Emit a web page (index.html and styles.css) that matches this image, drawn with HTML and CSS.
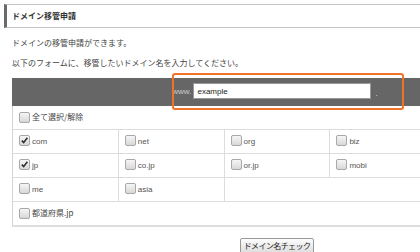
FILE: index.html
```html
<!DOCTYPE html>
<html lang="ja">
<head>
    <meta charset="UTF-8">
    <title>ドメイン移管申請</title>
    <link rel="stylesheet" href="styles.css">
</head>
<body>
    <div class="page">
        <h2 class="heading">ドメイン移管申請</h2>

        <div class="content">
            <p>ドメインの移管申請ができます。</p>
            <p>以下のフォームに、移管したいドメイン名を入力してください。</p>

            <div class="domain-bar">
                <span class="www">www.</span>
                <input type="text" class="domain-input" value="example">
                <span class="dot">.</span>
                <span class="highlight"></span>
            </div>

            <table class="tld-table">
                <tr>
                    <td colspan="5"><span class="cb"></span><span class="label ja">全て選択/解除</span></td>
                </tr>
                <tr>
                    <td><span class="cb checked"><svg viewBox="0 0 9 9"><path d="M1.8 4.6 L3.7 6.6 L7.4 1.8" /></svg></span><span class="label">com</span></td>
                    <td><span class="cb"></span><span class="label">net</span></td>
                    <td><span class="cb"></span><span class="label">org</span></td>
                    <td><span class="cb"></span><span class="label">biz</span></td>
                    <td></td>
                </tr>
                <tr>
                    <td><span class="cb checked"><svg viewBox="0 0 9 9"><path d="M1.8 4.6 L3.7 6.6 L7.4 1.8" /></svg></span><span class="label">jp</span></td>
                    <td><span class="cb"></span><span class="label">co.jp</span></td>
                    <td><span class="cb"></span><span class="label">or.jp</span></td>
                    <td><span class="cb"></span><span class="label">mobi</span></td>
                    <td></td>
                </tr>
                <tr>
                    <td><span class="cb"></span><span class="label">me</span></td>
                    <td><span class="cb"></span><span class="label">asia</span></td>
                    <td colspan="3"></td>
                </tr>
                <tr class="last">
                    <td colspan="5"><span class="cb"></span><span class="label ja">都道府県.jp</span></td>
                </tr>
            </table>

            <div class="submit-row">
                <button type="button" class="check-btn">ドメイン名チェック</button>
            </div>
        </div>
    </div>
</body>
</html>
```

FILE: styles.css
```css
html, body {
    margin: 0;
    padding: 0;
    overflow: hidden;
    background-color: #fff;
}
body {
    font-family: "Noto Sans CJK JP", "Liberation Sans", sans-serif;
    font-size: 8px;
    color: #444;
}
.page {
    width: 420px;
    height: 252px;
    overflow: hidden;
}
.heading {
    margin: 4px 0 0 4px;
    width: 600px;
    height: 22px;
    line-height: 22px;
    padding-left: 5px;
    border: 1px solid #c4c4c4;
    border-left: 3px solid #6a6a6a;
    font-size: 8px;
    font-weight: bold;
    color: #333;
}
.content {
    width: 530px;
    margin-left: 12px;
    padding-top: 5px;
}
.content p {
    margin: 0;
    line-height: 20px;
}
.domain-bar {
    position: relative;
    margin-top: 5px;
    height: 28px;
    background-color: #666;
    display: flex;
    align-items: center;
    justify-content: center;
}
.www {
    color: #ccc;
    font-family: "Liberation Sans", sans-serif;
    font-size: 8px;
    margin-right: 2px;
    margin-top: -2px;
}
.domain-input {
    width: 178px;
    height: 16px;
    box-sizing: border-box;
    border: 1px solid #999;
    padding: 0 3px;
    margin: -2px 0 0 0;
    font-family: "Liberation Sans", sans-serif;
    font-size: 8px;
    color: #222;
    background: #fff;
}
.dot {
    color: #ccc;
    margin-left: 4px;
    margin-right: 4px;
}
.highlight {
    position: absolute;
    left: 160px;
    top: -5px;
    width: 232px;
    height: 37px;
    box-sizing: border-box;
    border: 2px solid #f07328;
    border-radius: 3px;
}
.tld-table {
    width: 530px;
    table-layout: fixed;
    border-collapse: collapse;
    border-left: 1px solid #d4d4d4;
}
.tld-table td {
    height: 23px;
    padding: 0 0 0 6px;
    border-bottom: 1px solid #dcdcdc;
    border-right: 1px solid #dcdcdc;
    font-family: "Liberation Sans", sans-serif;
    font-size: 8px;
    color: #555;
    vertical-align: middle;
    white-space: nowrap;
}
.tld-table tr.last td {
    border-bottom: 2px solid #ddd;
}
.cb {
    display: inline-block;
    vertical-align: middle;
    width: 9px;
    height: 9px;
    border: 1px solid #a8a8a8;
    border-radius: 2px;
    background: linear-gradient(#f6f6f6, #d8d8d8);
    position: relative;
    top: -1px;
}
.cb svg {
    display: block;
    width: 9px;
    height: 9px;
}
.cb svg path {
    fill: none;
    stroke: #333;
    stroke-width: 1.6;
}
.label {
    margin-left: 2px;
}
.label.ja {
    font-family: "Noto Sans CJK JP", sans-serif;
    color: #444;
}
.submit-row {
    text-align: center;
    padding-top: 11px;
}
.check-btn {
    font-family: "Noto Sans CJK JP", sans-serif;
    font-size: 8px;
    letter-spacing: -0.6px;
    color: #222;
    height: 16px;
    line-height: 12px;
    padding: 0 3px;
    border: 1px solid #999;
    border-radius: 2px;
    background: linear-gradient(#fdfdfd, #dcdcdc);
}
```
